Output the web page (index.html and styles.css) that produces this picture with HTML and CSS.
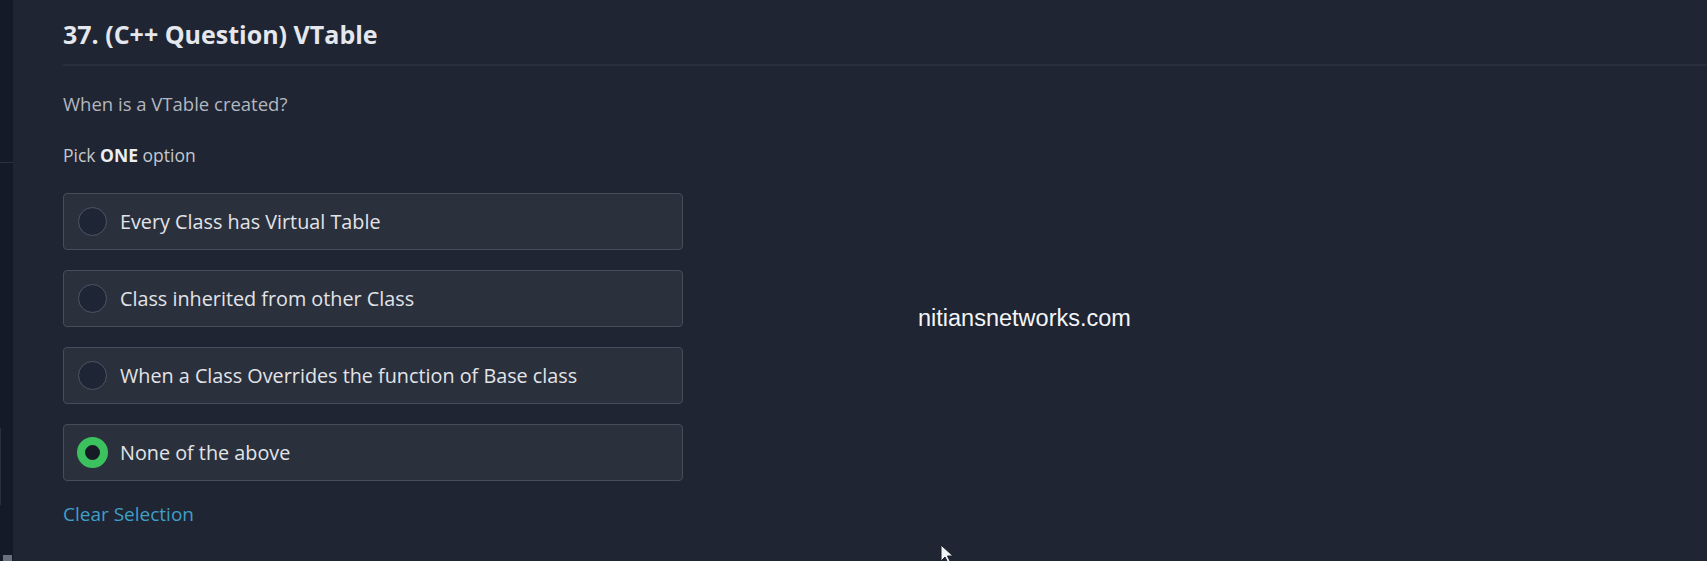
FILE: index.html
```html
<!DOCTYPE html>
<html lang="en">
<head>
<meta charset="utf-8">
<title>37. (C++ Question) VTable</title>
<link rel="stylesheet" href="styles.css">
</head>
<body>
<div class="app">
  <aside class="rail">
    <div class="rail-top"></div>
    <div class="rail-mark"></div>
    <div class="rail-thumb"></div>
  </aside>
  <main class="main">
    <h1 class="title">37. (C++ Question) VTable</h1>
    <div class="sep"></div>
    <p class="question">When is a VTable created?</p>
    <p class="pick">Pick <b>ONE</b> option</p>
    <div class="options">
      <label class="option"><span class="radio"></span><span class="opt-text">Every Class has Virtual Table</span></label>
      <label class="option"><span class="radio"></span><span class="opt-text">Class inherited from other Class</span></label>
      <label class="option"><span class="radio"></span><span class="opt-text">When a Class Overrides the function of Base class</span></label>
      <label class="option"><span class="radio radio-on"></span><span class="opt-text">None of the above</span></label>
    </div>
    <a class="clear">Clear Selection</a>
  </main>
</div>
<div class="watermark">nitiansnetworks.com</div>
<svg class="cursor" width="14" height="20" viewBox="0 0 14 20"><path d="M1 1 L1 17 L5 13 L8 19 L10.5 18 L7.5 12 L13 12 Z" fill="#f2f3f5" stroke="#1a1f2b" stroke-width="1"/></svg>
</body>
</html>
```
FILE: styles.css
```css
html, body {
  margin: 0;
  padding: 0;
  background: #1f2533;
  width: 1707px;
  height: 561px;
  overflow: hidden;
}
body {
  font-family: "Open Sans", "Noto Sans", sans-serif;
  position: relative;
}
.app {
  display: flex;
  height: 561px;
}
.rail {
  width: 13px;
  flex: none;
  background: #151a28;
  display: flex;
  flex-direction: column;
}
.rail-top {
  height: 162px;
  border-bottom: 1px solid #2b3141;
}
.rail-mark {
  margin-top: 265px;
  height: 77px;
  border-left: 1px solid #283040;
}
.rail-thumb {
  margin-top: auto;
  margin-left: 3px;
  width: 9px;
  height: 6px;
  background: #6a707d;
}
.main {
  flex: 1;
  padding-left: 50px;
  display: flex;
  flex-direction: column;
  align-items: flex-start;
}
.title {
  margin: 18px 0 0;
  font-size: 25px;
  line-height: 32px;
  font-weight: 700;
  color: #e4e7ec;
}
.sep {
  align-self: stretch;
  margin-top: 14px;
  height: 2px;
  background: #282e3b;
}
.question {
  margin: 25px 0 0;
  font-size: 18.5px;
  line-height: 26px;
  color: #b3b7bf;
}
.pick {
  margin: 25px 0 0;
  font-size: 17.5px;
  line-height: 26px;
  color: #c4c7cd;
}
.pick b {
  color: #eceef1;
}
.options {
  margin-top: 25px;
  display: flex;
  flex-direction: column;
  gap: 20px;
}
.option {
  box-sizing: border-box;
  width: 620px;
  height: 57px;
  background: #2b303d;
  border: 1px solid #464c59;
  border-radius: 4px;
  display: flex;
  align-items: center;
  padding-left: 14px;
  gap: 13px;
}
.radio {
  box-sizing: border-box;
  width: 29px;
  height: 29px;
  border-radius: 50%;
  background: #1e2535;
  border: 1.5px solid #4f5563;
  flex: none;
}
.radio-on {
  width: 31px;
  height: 31px;
  margin-left: -1px;
  margin-right: -1px;
  border: 8px solid #3cc15f;
  background: #161b25;
}
.opt-text {
  font-size: 19.8px;
  color: #e2e4e8;
}
.clear {
  margin-top: 20px;
  font-size: 19px;
  line-height: 26px;
  color: #3f9fc6;
}
.watermark {
  position: absolute;
  left: 918px;
  top: 305px;
  font-family: "Liberation Sans", Arial, sans-serif;
  font-size: 23.5px;
  line-height: 27px;
  color: #f4f5f7;
}
.cursor {
  position: absolute;
  left: 940px;
  top: 544px;
}
```
